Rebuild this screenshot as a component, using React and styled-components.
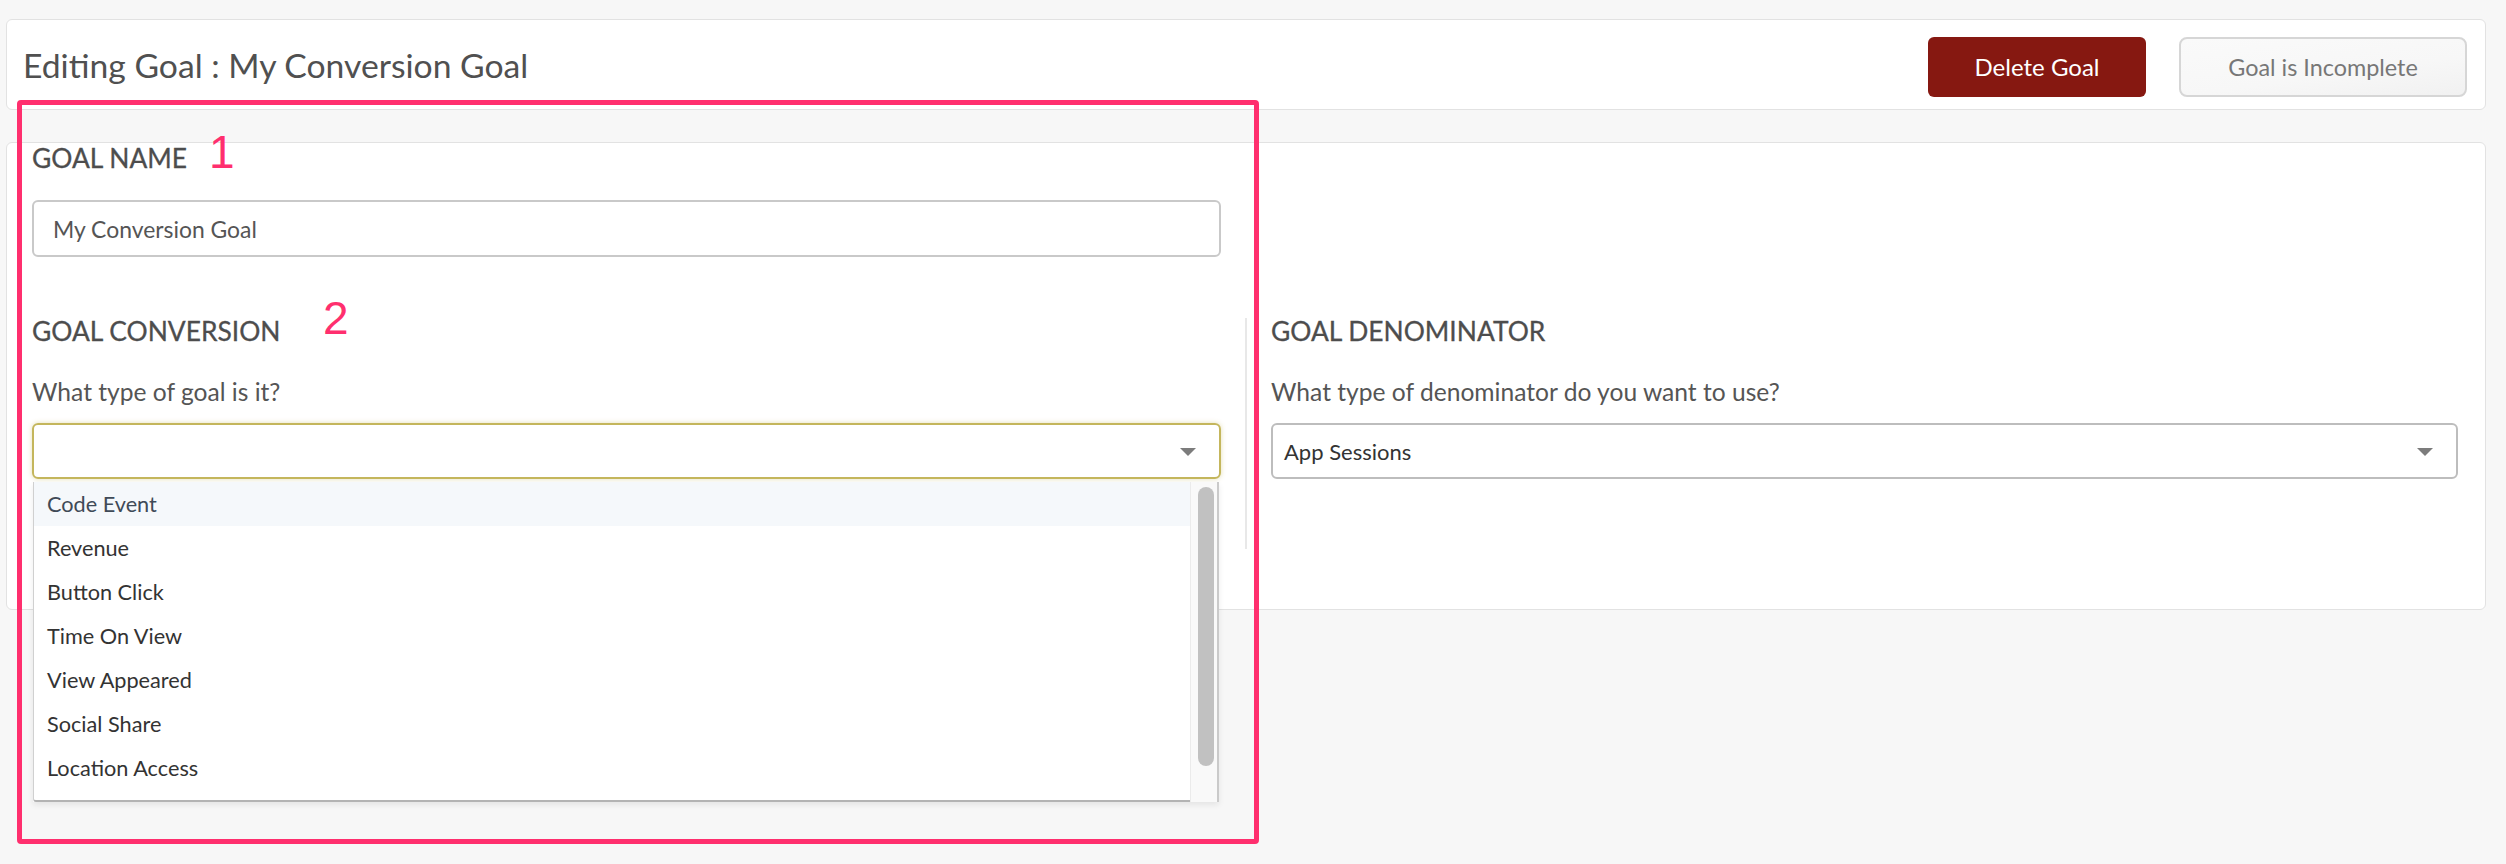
import React from "react";
import styled, { createGlobalStyle } from "styled-components";

const GlobalStyle = createGlobalStyle`
  html, body { margin: 0; padding: 0; background: #f7f7f7; }
  body { font-family: "Lato", "Open Sans", sans-serif; color: #555; }
  * { box-sizing: border-box; }
`;

const Page = styled.div`
  position: relative;
  min-height: 864px;
  padding: 19px 20px 0 6px;
`;

const Card = styled.div`
  background: #fff;
  border: 1px solid #e2e2e2;
  border-radius: 6px;
`;

const HeaderCard = styled(Card)`
  height: 91px;
  display: flex;
  align-items: center;
  justify-content: space-between;
  padding: 0 18px 0 16px;
`;

const Title = styled.h1`
  margin: 0;
  font-size: 33.7px;
  font-weight: 400;
  color: #505050;
  line-height: 40px;
`;

const Actions = styled.div`
  display: flex;
  align-items: center;
  gap: 33px;
  padding-top: 4px;
`;

const DangerButton = styled.button`
  width: 218px;
  height: 60px;
  border: none;
  border-radius: 6px;
  background: #861811;
  color: #fff;
  font-family: inherit;
  font-size: 24px;
`;

const StatusButton = styled.button`
  width: 288px;
  height: 60px;
  border: 2px solid #d6d6d6;
  border-radius: 8px;
  background: linear-gradient(172deg, #fafafa 0%, #f7f7f7 60%, #f1f1f1 100%);
  color: #777;
  font-family: inherit;
  font-size: 23.4px;
`;

const FormCard = styled(Card)`
  margin-top: 32px;
  padding: 0 27px 60px 25px;
`;

const SectionTitle = styled.h2`
  margin: 0;
  font-size: 26.4px;
  line-height: 30px;
  font-weight: 400;
  color: #4d4d4d;
  -webkit-text-stroke: 0.3px #4d4d4d;
`;

const TextInput = styled.div`
  margin-top: 27px;
  width: 1189px;
  height: 57px;
  border: 2px solid #c9c9c9;
  border-radius: 6px;
  padding-left: 19px;
  display: flex;
  align-items: center;
  font-size: 22.9px;
  color: #555;
`;

const Columns = styled.div`
  margin-top: 59px;
  display: grid;
  grid-template-columns: 1189px 2px 1fr;
  column-gap: 24px;
`;

const Column = styled.div`
  display: flex;
  flex-direction: column;
`;

const Divider = styled.div`
  width: 2px;
  height: 231px;
  margin-top: 2px;
  background: #e8e8e8;
`;

const Question = styled.div`
  margin-top: 33px;
  font-size: 24.6px;
  line-height: 26px;
  color: #555;
`;

const SelectWrap = styled.div`
  position: relative;
  margin-top: 18px;
`;

const SelectBox = styled.div`
  height: 56px;
  border: 2px solid ${(p) => (p.$focused ? "#c4b65c" : "#bdbdbd")};
  border-radius: 6px;
  box-shadow: ${(p) => (p.$focused ? "0 0 5px rgba(196,182,92,0.45)" : "none")};
  display: flex;
  align-items: center;
  padding: 0 0 0 11px;
  font-size: 22px;
  color: #333;
  position: relative;
`;

const Caret = styled.span`
  position: absolute;
  right: 23px;
  top: 50%;
  margin-top: -3px;
  width: 0;
  height: 0;
  border-left: 8px solid transparent;
  border-right: 8px solid transparent;
  border-top: 8px solid #7c7c7c;
`;

const Menu = styled.div`
  position: absolute;
  top: calc(100% + 3px);
  left: 1px;
  right: 2px;
  height: 320px;
  display: flex;
  background: #fff;
  box-shadow: 0 3px 6px rgba(0, 0, 0, 0.08);
  z-index: 5;
`;

const MenuList = styled.ul`
  flex: 1;
  margin: 0;
  padding: 0;
  list-style: none;
  overflow: hidden;
  border-left: 1px solid #d0d0d0;
  border-bottom: 2px solid #b3b3b3;
  border-bottom-left-radius: 3px;
`;

const MenuItem = styled.li`
  height: 44px;
  line-height: 44px;
  padding-left: 13px;
  font-size: 21.7px;
  color: ${(p) => (p.$active ? "#3f4a57" : "#333")};
  background: ${(p) => (p.$active ? "#f5f8fb" : "#fff")};
`;

const ScrollTrack = styled.div`
  width: 29px;
  background: #f9f9f9;
  border-left: 1px solid #ebebeb;
  border-right: 2px solid #cacaca;
  padding: 5px 3px 0 7px;
`;

const ScrollThumb = styled.div`
  width: 16px;
  height: 279px;
  border-radius: 8px;
  background: #c1c1c1;
`;

const AnnotationFrame = styled.div`
  position: absolute;
  left: 17px;
  top: 100px;
  width: 1242px;
  height: 744px;
  border: 5px solid #ff2f6e;
  border-radius: 4px;
  pointer-events: none;
  z-index: 10;
`;

const Marker = styled.span`
  position: absolute;
  left: ${(p) => p.$x}px;
  top: ${(p) => p.$y}px;
  font-family: "Liberation Sans", Arial, sans-serif;
  font-size: 46px;
  line-height: 1;
  color: #ff2f6e;
  z-index: 10;
`;

const goalTypes = [
  "Code Event",
  "Revenue",
  "Button Click",
  "Time On View",
  "View Appeared",
  "Social Share",
  "Location Access",
];

export default function App() {
  return (
    <Page>
      <GlobalStyle />
      <HeaderCard>
        <Title>Editing Goal : My Conversion Goal</Title>
        <Actions>
          <DangerButton>Delete Goal</DangerButton>
          <StatusButton>Goal is Incomplete</StatusButton>
        </Actions>
      </HeaderCard>

      <FormCard>
        <SectionTitle>GOAL NAME</SectionTitle>
        <TextInput>My Conversion Goal</TextInput>

        <Columns>
          <Column>
            <SectionTitle>GOAL CONVERSION</SectionTitle>
            <Question>What type of goal is it?</Question>
            <SelectWrap>
              <SelectBox $focused>
                <Caret />
              </SelectBox>
              <Menu>
                <MenuList>
                  {goalTypes.map((t, i) => (
                    <MenuItem key={t} $active={i === 0}>
                      {t}
                    </MenuItem>
                  ))}
                </MenuList>
                <ScrollTrack>
                  <ScrollThumb />
                </ScrollTrack>
              </Menu>
            </SelectWrap>
          </Column>
          <Divider />
          <Column>
            <SectionTitle>GOAL DENOMINATOR</SectionTitle>
            <Question>What type of denominator do you want to use?</Question>
            <SelectWrap>
              <SelectBox>
                App Sessions
                <Caret />
              </SelectBox>
            </SelectWrap>
          </Column>
        </Columns>
      </FormCard>

      <AnnotationFrame />
      <Marker $x={209} $y={129}>1</Marker>
      <Marker $x={323} $y={295}>2</Marker>
    </Page>
  );
}
